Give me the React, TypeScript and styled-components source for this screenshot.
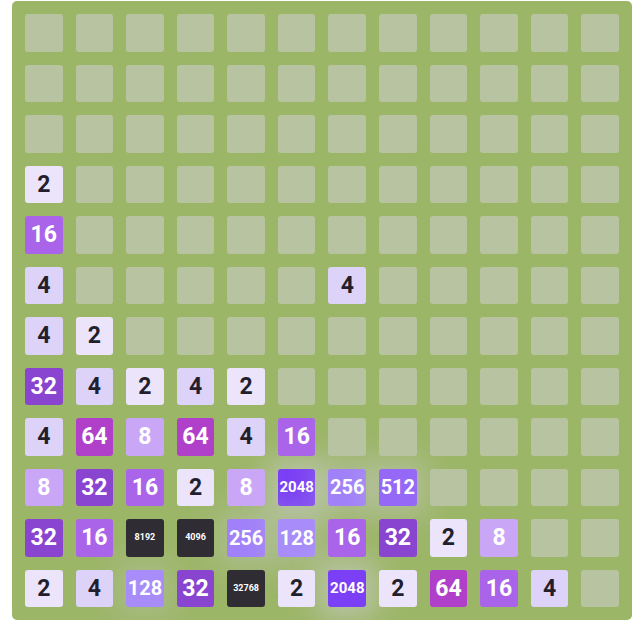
import React from "react";
import styled, { createGlobalStyle, css } from "styled-components";

const GlobalStyle = createGlobalStyle`
  html, body {
    margin: 0;
    padding: 0;
    background: #ffffff;
  }
  body {
    font-family: Roboto, "Noto Sans", "Liberation Sans", sans-serif;
  }
`;

const Page = styled.div`
  padding: 1px 8px 0 12px;
`;

const Board = styled.div`
  width: 620px;
  height: 619px;
  box-sizing: border-box;
  padding: 13px;
  display: grid;
  grid-template-columns: repeat(12, 1fr);
  grid-template-rows: repeat(12, 1fr);
  gap: 13px 13px;
  background: #9cb668;
  border-radius: 5px;
`;

const EmptyCell = styled.div`
  position: relative;
  z-index: 1;
  border-radius: 3px;
  background: #b8c4a1;
`;

type TileStyle = { bg: string; fg: string; size: number; glow: number };

const styles: Record<number, TileStyle> = {
  2: { bg: "#ebe4fb", fg: "#221e2c", size: 23, glow: 0 },
  4: { bg: "#ddd2f8", fg: "#221e2c", size: 23, glow: 0 },
  8: { bg: "#caa6f6", fg: "#ffffff", size: 23, glow: 0 },
  16: { bg: "#a964e9", fg: "#ffffff", size: 23, glow: 0 },
  32: { bg: "#8945d0", fg: "#ffffff", size: 23, glow: 0 },
  64: { bg: "#b03fc9", fg: "#ffffff", size: 23, glow: 0 },
  128: { bg: "#a78cfa", fg: "#ffffff", size: 20, glow: 0.28 },
  256: { bg: "#a181f9", fg: "#ffffff", size: 20, glow: 0.36 },
  512: { bg: "#9568f7", fg: "#ffffff", size: 20, glow: 0.44 },
  2048: { bg: "#7b40f5", fg: "#ffffff", size: 15, glow: 0.62 },
  4096: { bg: "#2f2c34", fg: "#ffffff", size: 9, glow: 0 },
  8192: { bg: "#2f2c34", fg: "#ffffff", size: 9, glow: 0 },
  32768: { bg: "#2f2c34", fg: "#ffffff", size: 9, glow: 0 },
};

const Tile = styled.div<{ $look: TileStyle }>`
  position: relative;
  z-index: ${(p) => (p.$look.glow > 0 ? 0 : 1)};
  display: flex;
  align-items: center;
  justify-content: center;
  border-radius: 3px;
  font-weight: 700;
  line-height: 1;
  background: ${(p) => p.$look.bg};
  color: ${(p) => p.$look.fg};
  font-size: ${(p) => p.$look.size}px;
  ${(p) =>
    p.$look.glow > 0 &&
    css`
      box-shadow: 0 0 30px 10px rgba(206, 206, 212, ${p.$look.glow});
    `}
`;

const board: number[][] = [
  [0, 0, 0, 0, 0, 0, 0, 0, 0, 0, 0, 0],
  [0, 0, 0, 0, 0, 0, 0, 0, 0, 0, 0, 0],
  [0, 0, 0, 0, 0, 0, 0, 0, 0, 0, 0, 0],
  [2, 0, 0, 0, 0, 0, 0, 0, 0, 0, 0, 0],
  [16, 0, 0, 0, 0, 0, 0, 0, 0, 0, 0, 0],
  [4, 0, 0, 0, 0, 0, 4, 0, 0, 0, 0, 0],
  [4, 2, 0, 0, 0, 0, 0, 0, 0, 0, 0, 0],
  [32, 4, 2, 4, 2, 0, 0, 0, 0, 0, 0, 0],
  [4, 64, 8, 64, 4, 16, 0, 0, 0, 0, 0, 0],
  [8, 32, 16, 2, 8, 2048, 256, 512, 0, 0, 0, 0],
  [32, 16, 8192, 4096, 256, 128, 16, 32, 2, 8, 0, 0],
  [2, 4, 128, 32, 32768, 2, 2048, 2, 64, 16, 4, 0],
];

export default function App() {
  return (
    <>
      <GlobalStyle />
      <Page>
        <Board>
          {board.flatMap((row, r) =>
            row.map((value, c) =>
              value === 0 ? (
                <EmptyCell key={`${r}-${c}`} />
              ) : (
                <Tile key={`${r}-${c}`} $look={styles[value]}>
                  {value}
                </Tile>
              )
            )
          )}
        </Board>
      </Page>
    </>
  );
}
